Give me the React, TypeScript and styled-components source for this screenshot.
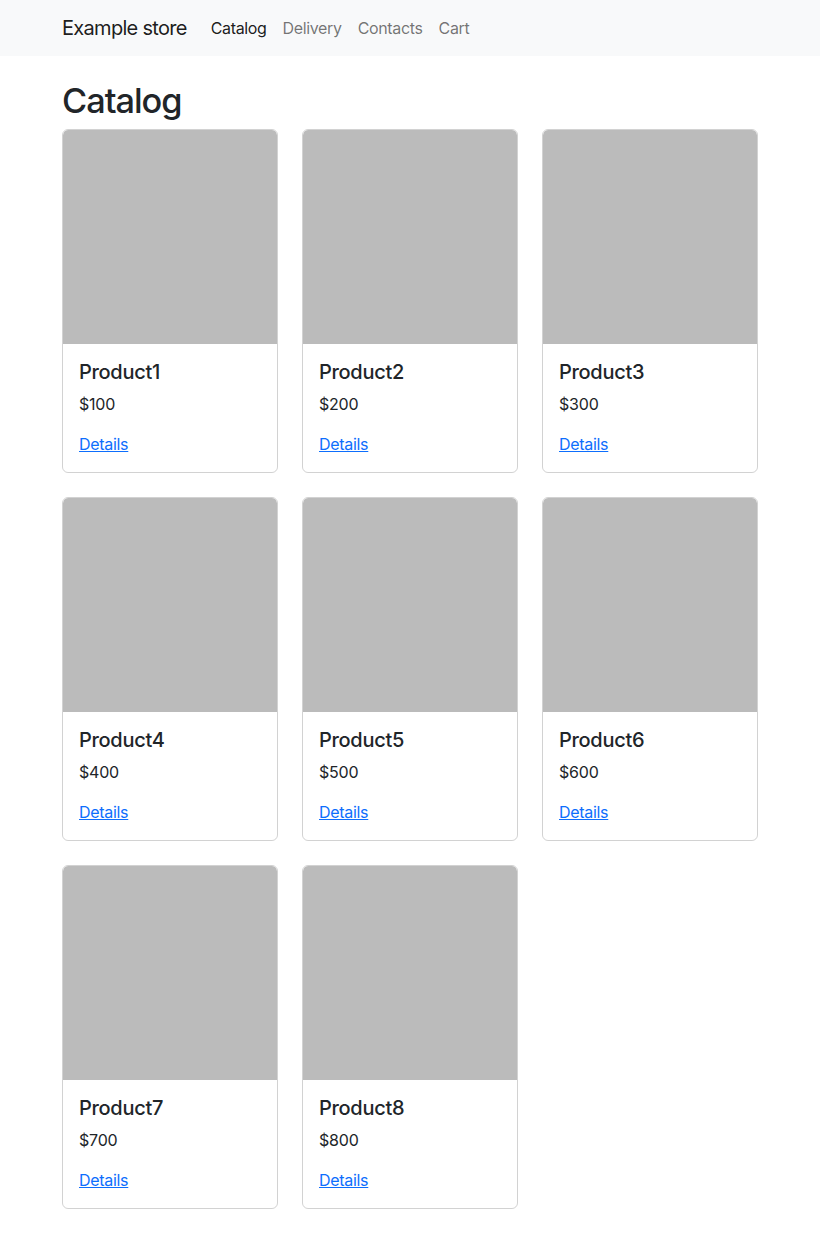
import React from "react";
import styled, { createGlobalStyle } from "styled-components";

const GlobalStyle = createGlobalStyle`
  *, *::before, *::after { box-sizing: border-box; }
  body {
    margin: 0;
    font-family: Inter, "Noto Sans", "Liberation Sans", sans-serif;
    font-size: 16px;
    line-height: 1.5;
    color: #212529;
    background: #fff;
  }
`;

const Navbar = styled.nav`
  background: #f8f9fa;
  padding: 8px 0;
`;

const Container = styled.div`
  max-width: 720px;
  margin: 0 auto;
  padding: 0 12px;
`;

const NavInner = styled(Container)`
  display: flex;
  align-items: center;
`;

const Brand = styled.a`
  font-size: 20px;
  line-height: 30px;
  padding: 5px 0;
  margin-right: 16px;
  color: rgba(0, 0, 0, 0.9);
  text-decoration: none;
  letter-spacing: -0.7px;
`;

const NavList = styled.div`
  display: flex;
`;

const NavLink = styled.a<{ $active?: boolean }>`
  padding: 8px 8px;
  line-height: 24px;
  font-size: 16px;
  text-decoration: none;
  letter-spacing: -0.35px;
  color: ${(p) => (p.$active ? "rgba(0,0,0,0.9)" : "rgba(0,0,0,0.55)")};
`;

const Title = styled.h1`
  font-size: 34.3px;
  font-weight: 500;
  line-height: 1.2;
  margin: 24px 0 8px;
  letter-spacing: -1px;
`;

const Grid = styled.div`
  display: grid;
  grid-template-columns: repeat(3, 1fr);
  gap: 24px;
  padding-bottom: 24px;
`;

const Card = styled.div`
  border: 1px solid rgba(0, 0, 0, 0.175);
  border-radius: 6px;
  overflow: hidden;
  display: flex;
  flex-direction: column;
`;

const CardImage = styled.div`
  height: 214px;
  background: #bbbbbb;
  border-top-left-radius: 5px;
  border-top-right-radius: 5px;
`;

const CardBody = styled.div`
  padding: 16px;
`;

const CardTitle = styled.h5`
  font-size: 20px;
  font-weight: 500;
  line-height: 1.2;
  margin: 0 0 8px;
  letter-spacing: -0.3px;
`;

const Price = styled.p`
  margin: 0 0 16px;
  letter-spacing: -0.2px;
`;

const Details = styled.a`
  color: #0d6efd;
  text-decoration: underline;
  letter-spacing: -0.3px;
`;

const products = [1, 2, 3, 4, 5, 6, 7, 8].map((n) => ({
  name: `Product${n}`,
  price: `$${n * 100}`,
}));

export default function App() {
  return (
    <>
      <GlobalStyle />
      <Navbar>
        <NavInner>
          <Brand href="#">Example store</Brand>
          <NavList>
            <NavLink $active href="#">Catalog</NavLink>
            <NavLink href="#">Delivery</NavLink>
            <NavLink href="#">Contacts</NavLink>
            <NavLink href="#">Cart</NavLink>
          </NavList>
        </NavInner>
      </Navbar>
      <Container>
        <Title>Catalog</Title>
        <Grid>
          {products.map((p) => (
            <Card key={p.name}>
              <CardImage />
              <CardBody>
                <CardTitle>{p.name}</CardTitle>
                <Price>{p.price}</Price>
                <Details href="#">Details</Details>
              </CardBody>
            </Card>
          ))}
        </Grid>
      </Container>
    </>
  );
}
